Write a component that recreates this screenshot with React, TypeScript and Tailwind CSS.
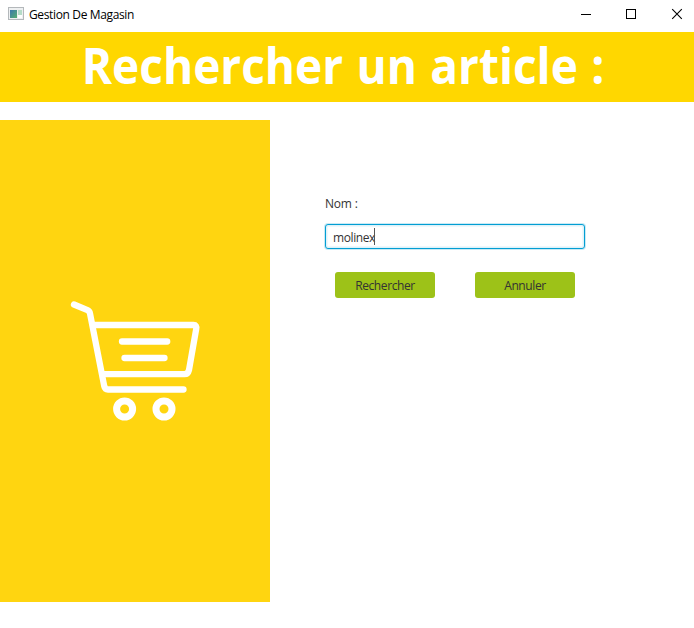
import React from "react";

function AppIcon() {
  return (
    <svg width="16" height="14" viewBox="0 0 16 14" shapeRendering="crispEdges">
      <defs>
        <linearGradient id="pane" x1="0" y1="0" x2="1" y2="1">
          <stop offset="0" stopColor="#3c78ac" />
          <stop offset="1" stopColor="#56b070" />
        </linearGradient>
      </defs>
      <rect x="0" y="0" width="16" height="13" fill="#b4b8bb" />
      <rect x="1" y="1" width="14" height="11" fill="#eef0f1" />
      <rect x="2" y="3" width="7" height="8" fill="url(#pane)" />
      <rect x="10" y="3" width="4" height="5" fill="#b5dcc8" />
      <rect x="10" y="8" width="4" height="3" fill="#ffffff" />
    </svg>
  );
}

function TitleBar() {
  return (
    <div className="flex h-8 items-start bg-white">
      <div className="flex h-7 flex-1 items-center pl-2">
        <AppIcon />
        <span className="ml-[5px] pt-[2px] whitespace-nowrap text-[12px] leading-4 tracking-[-0.36px] text-black">
          Gestion De Magasin
        </span>
      </div>
      <svg width="114" height="28" viewBox="0 0 114 28" fill="none" stroke="#000">
        <path d="M1 14.5H11" shapeRendering="crispEdges" />
        <rect x="46.5" y="9.5" width="9" height="9" shapeRendering="crispEdges" />
        <path d="M92.2 9.2L101.8 18.8M101.8 9.2L92.2 18.8" strokeWidth="1.1" />
      </svg>
    </div>
  );
}

function Cart() {
  return (
    <svg
      className="mb-[2px]"
      width="150"
      height="140"
      viewBox="0 0 150 140"
      fill="none"
      stroke="#fff"
      strokeWidth="6.3"
      strokeLinecap="round"
      strokeLinejoin="round"
    >
      <path d="M14 14.5L27.5 20.2Q29.6 21.2 30 23.5L44.2 96Q45 99.5 48 99.5H123.5" />
      <path d="M33 35H133.5Q137 35 136.2 39L129 80Q128 84.2 124.5 84.2H43" />
      <path d="M62 51.5H107.2M64.5 68H104.5" />
      <circle cx="64.6" cy="119" r="8" strokeWidth="7" />
      <circle cx="104" cy="119" r="8" strokeWidth="7" />
    </svg>
  );
}

function Button({ label }: { label: string }) {
  return (
    <button className="flex h-[26px] w-[100px] items-center justify-center rounded-[3px] bg-[#9dc218] pt-px text-[12px] leading-4 tracking-[-0.4px] text-[#333]">
      {label}
    </button>
  );
}

export default function App() {
  return (
    <div className="h-[628px] w-[694px] overflow-hidden bg-white font-['Segoe_UI','Open_Sans',sans-serif]">
      <TitleBar />
      <header className="flex h-[70px] justify-center bg-[#ffd700] pr-[7px]">
        <h1 className="h-[66px] scale-x-[0.92] whitespace-nowrap text-[50px] leading-[66px] font-bold text-white [word-spacing:1.5px]">
          Rechercher un article :
        </h1>
      </header>
      <main className="mt-[18px] flex">
        <aside className="flex h-[482px] w-[270px] items-center justify-center bg-[#ffd510]">
          <Cart />
        </aside>
        <section className="ml-[55px] w-[260px] pt-[76px] text-[12px] text-[#333]">
          <label className="block leading-4 tracking-[-0.2px]">Nom :</label>
          <div className="mt-[12px] flex h-[25px] items-center rounded-[3px] border border-[#039ed3] bg-white pl-[7px] shadow-[0_0_0_1px_#c9eaf5,inset_0_0_0_1.5px_#def2f9]">
            <span className="pt-[2px] leading-4 tracking-[-0.4px]">molinex</span>
            <span className="-ml-px h-[17px] w-px bg-[#555]" />
          </div>
          <div className="mt-[23px] flex gap-10 pl-[10px]">
            <Button label="Rechercher" />
            <Button label="Annuler" />
          </div>
        </section>
      </main>
    </div>
  );
}
